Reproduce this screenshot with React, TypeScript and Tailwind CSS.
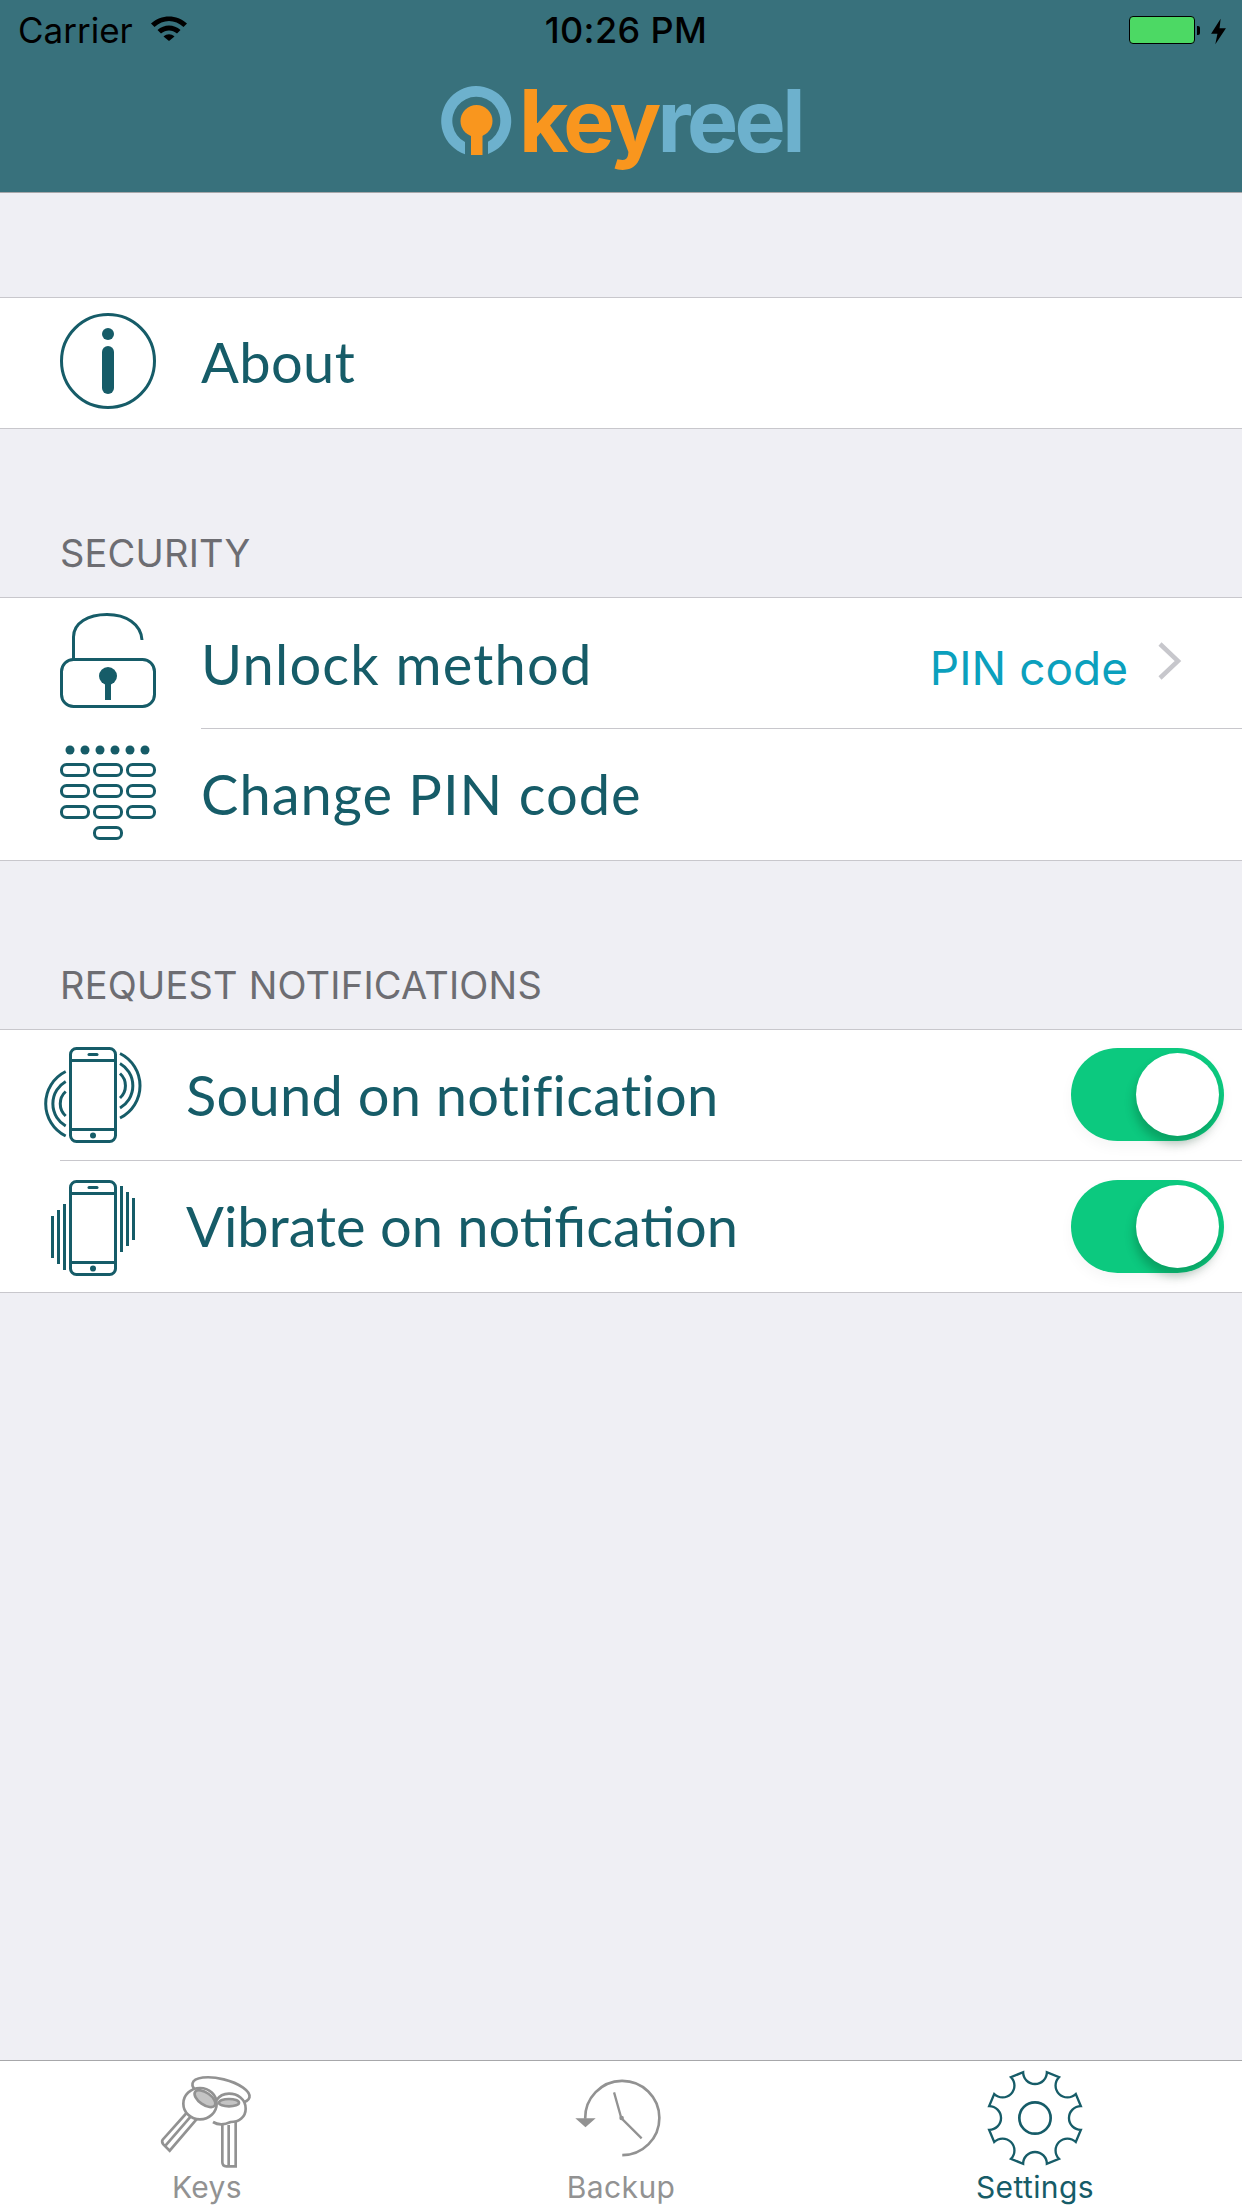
import React from "react";

const TEAL = "#165c68";

const gearPath = (() => {
  const cx = 315, cy = 203, r = 142, half = (14.5 * Math.PI) / 180;
  let d = "";
  for (let i = 0; i < 8; i++) {
    const a = (i * Math.PI) / 4;
    const p1 = [cx + r * Math.sin(a - half), cy - r * Math.cos(a - half)];
    const p2 = [cx + r * Math.sin(a + half), cy - r * Math.cos(a + half)];
    const f = (p: number[]) => `${p[0].toFixed(1)} ${p[1].toFixed(1)}`;
    d += i === 0 ? `M${f(p1)}` : `L${f(p1)}`;
    d += `A33 33 0 0 0 ${f(p2)}`;
  }
  return d + "Z";
})();

function Logo() {
  return (
    <div className="flex items-start h-[88px]" style={{ width: 362 }}>
      <svg width="84" height="76" viewBox="440 80 84 76" className="shrink-0">
        <path d="M465 151.2A35 35 0 1 1 488 151V138.8A24 24 0 1 0 465 139Z" fill="#6db1cd" />
        <circle cx="476.5" cy="118" r="16" fill="#f9961e" />
        <rect x="471" y="125" width="11.5" height="27" fill="#f9961e" />
      </svg>
      <div className="ml-[-5px] mt-[-6px] text-[86px] leading-[88px] font-bold tracking-[-3.6px] font-['Inter',sans-serif] whitespace-nowrap">
        <span className="text-[#f9961e]">key</span>
        <span className="text-[#6db1cd]">reel</span>
      </div>
    </div>
  );
}

function StatusBar() {
  return (
    <div className="relative flex items-center h-[60px] pl-[18px] pr-[15px] text-black font-['Inter',sans-serif] text-[35px] leading-[44px]">
      <span>Carrier</span>
      <svg width="38" height="26" viewBox="0 0 38 26" className="ml-[17px] mb-[4px]">
        <path d="M1 8.5C11 -1 27 -1 37 8.5L33.5 12C25 4 13 4 4.5 12Z" fill="#000" />
        <path d="M7.5 15C14 9 24 9 30.5 15L27 18.5C22 14.5 16 14.5 11 18.5Z" fill="#000" />
        <path d="M13.5 21.5C17 18.5 21 18.5 24.5 21.5L19 26Z" fill="#000" />
      </svg>
      <span className="absolute left-[10px] right-0 text-center text-[36px] font-medium tracking-[0.4px]">10:26 PM</span>
      <div className="ml-auto flex items-center">
        <div className="w-[66px] h-[28px] rounded-[4px] border border-black bg-[#4cd964]" />
        <div className="w-[3px] h-[9px] ml-[2px] rounded-r-[2px] bg-black" />
        <svg width="17" height="27" viewBox="0 0 16 24" className="ml-[10px] mt-[2px]">
          <path d="M10 0L1 14H7L5 24L15 9H9Z" fill="#000" />
        </svg>
      </div>
    </div>
  );
}

function Row({
  label,
  svg,
  labelClass,
  sep,
  right,
}: {
  label: string;
  svg: React.ReactNode;
  labelClass: string;
  sep?: string;
  right?: React.ReactNode;
}) {
  return (
    <div className="relative flex items-center bg-white h-[131px]">
      {svg}
      <span className={`${labelClass} font-['Lato',sans-serif] text-[56px] leading-[64px] text-[#165c68] whitespace-nowrap`}>
        {label}
      </span>
      {right}
      {sep && <div className={`absolute bottom-0 right-0 h-px bg-[#c8c7cc] ${sep}`} />}
    </div>
  );
}

function Toggle({ up }: { up?: boolean }) {
  return (
    <div
      className={`ml-auto mr-[18px] flex items-center justify-end pr-[5px] w-[153px] h-[93px] rounded-full bg-[#0cc97f] shadow-[0_6px_14px_rgba(0,0,0,0.04)] ${
        up ? "mb-[2px]" : ""
      }`}
    >
      <div className="w-[83px] h-[83px] rounded-full bg-white shadow-[-2px_8px_10px_rgba(0,60,30,0.28)]" />
    </div>
  );
}

function SectionLabel({ children }: { children: React.ReactNode }) {
  return (
    <div className="flex items-end h-[168px] pl-[60px] pb-[22px] text-[38px] leading-[44px] tracking-[0.2px] text-[#6d6d72] font-['Inter',sans-serif]">
      {children}
    </div>
  );
}

function PhoneBody({ y }: { y: number }) {
  return (
    <g>
      <rect x="70.5" y={y + 1.5} width="45" height="93" rx="6" fill="none" stroke={TEAL} strokeWidth="3" />
      <line x1="70" x2="116" y1={y + 13.5} y2={y + 13.5} stroke={TEAL} strokeWidth="3" />
      <line x1="70" x2="116" y1={y + 82.5} y2={y + 82.5} stroke={TEAL} strokeWidth="3" />
      <line x1="89" x2="97" y1={y + 7.5} y2={y + 7.5} stroke={TEAL} strokeWidth="3" strokeLinecap="round" />
      <circle cx="93" cy={y + 88.5} r="3" fill={TEAL} />
    </g>
  );
}

function TabItem({ label, active, icon }: { label: string; active?: boolean; icon: React.ReactNode }) {
  return (
    <div className="flex-1 flex flex-col items-center h-full">
      <div className="h-[108px] w-full flex items-start justify-center">{icon}</div>
      <span
        className={`text-[30px] leading-[36px] font-['Inter',sans-serif] tracking-[0.4px] ${
          active ? "text-[#165c68]" : "text-[#929292]"
        }`}
      >
        {label}
      </span>
    </div>
  );
}

export default function App() {
  const keypadCols = [60, 93, 126];
  const keypadRows = [762, 783, 804];
  return (
    <div className="flex flex-col w-[1242px] h-[2208px] bg-[#efeff4] overflow-hidden">
      <header className="h-[193px] shrink-0 bg-[#38717c] border-b border-[#a7a7aa] flex flex-col">
        <StatusBar />
        <div className="flex justify-center pt-[23px]">
          <Logo />
        </div>
      </header>

      <section className="mt-[104px] border-t border-[#c8c7cc]">
        <div className="h-[130px] flex flex-col justify-center bg-white">
          <Row
            label="About"
            labelClass="ml-[41px] mb-[2px] tracking-[0.4px]"
            svg={
              <svg width="104" height="104" viewBox="56 310 104 104" className="ml-[56px] shrink-0">
                <circle cx="108" cy="360" r="46.5" fill="none" stroke={TEAL} strokeWidth="3" />
                <circle cx="108" cy="333" r="6" fill={TEAL} />
                <rect x="102" y="345" width="12" height="48" rx="6" fill={TEAL} />
              </svg>
            }
          />
        </div>
      </section>
      <div className="h-px bg-[#c8c7cc]" />

      <SectionLabel>SECURITY</SectionLabel>
      <section className="border-t border-[#c8c7cc]">
        <Row
          label="Unlock method"
          labelClass="ml-[41px] tracking-[1.2px]"
          sep="left-[201px]"
          svg={
            <svg width="104" height="104" viewBox="56 611 104 104" className="ml-[56px] shrink-0">
              <rect x="61.5" y="658.5" width="93" height="47" rx="12" fill="none" stroke={TEAL} strokeWidth="3" />
              <path d="M73.5 658V636C73.5 622 88 613.5 107 613.5C126 613.5 141 623 142 639" fill="none" stroke={TEAL} strokeWidth="3" />
              <circle cx="108" cy="675" r="9" fill={TEAL} />
              <rect x="105" y="678" width="6" height="21" fill={TEAL} />
            </svg>
          }
          right={
            <div className="ml-auto flex items-center mr-[60px]">
              <span className="font-['Inter',sans-serif] text-[46px] leading-[56px] text-[#0ba0bd] mt-[8px]">PIN code</span>
              <svg width="24" height="38" viewBox="0 0 24 38" className="ml-[30px] mb-[6px]">
                <path d="M2 2L20 19L2 36" fill="none" stroke="#c7c7cc" strokeWidth="4.5" />
              </svg>
            </div>
          }
        />
        <Row
          label="Change PIN code"
          labelClass="ml-[41px] mb-[2px] tracking-[1px]"
          svg={
            <svg width="104" height="100" viewBox="56 744 104 100" className="ml-[56px] shrink-0">
              {[70, 85, 100, 115, 130, 145].map((x) => (
                <circle key={x} cx={x} cy="749" r="4.5" fill={TEAL} />
              ))}
              {keypadRows.map((y) =>
                keypadCols.map((x) => (
                  <rect key={`${x}-${y}`} x={x + 1.5} y={y + 1.5} width="27" height="11" rx="5" fill="none" stroke={TEAL} strokeWidth="3" />
                ))
              )}
              <rect x="94.5" y="826.5" width="27" height="11" rx="5" fill="none" stroke={TEAL} strokeWidth="3" />
            </svg>
          }
        />
      </section>
      <div className="h-px bg-[#c8c7cc]" />

      <SectionLabel>REQUEST NOTIFICATIONS</SectionLabel>
      <section className="border-t border-[#c8c7cc]">
        <Row
          label="Sound on notification"
          labelClass="ml-[42px] mb-[2px] tracking-[0.25px]"
          sep="left-[60px]"
          svg={
            <svg width="104" height="104" viewBox="40 1044 104 104" className="ml-[40px] shrink-0">
              <PhoneBody y={1047} />
              <g fill="none" stroke={TEAL} strokeWidth="3">
                <path d="M120 1053.5A36 36 0 0 1 120 1118" />
                <path d="M120 1063.5A25.7 25.7 0 0 1 120 1108" />
                <path d="M120 1073.5A16.5 16.5 0 0 1 120 1098" />
                <path d="M65.7 1071.5A36 36 0 0 0 65.7 1136" />
                <path d="M65.7 1081.5A25.7 25.7 0 0 0 65.7 1126" />
                <path d="M65.7 1091.5A16.5 16.5 0 0 0 65.7 1116" />
              </g>
            </svg>
          }
          right={<Toggle up />}
        />
        <Row
          label="Vibrate on notification"
          labelClass="ml-[42px] mb-[2px]"
          svg={
            <svg width="104" height="104" viewBox="40 1174 104 104" className="ml-[40px] shrink-0">
              <PhoneBody y={1179} />
              <g fill={TEAL}>
                <rect x="120" y="1185" width="3" height="66" />
                <rect x="126" y="1191" width="3" height="54" />
                <rect x="132" y="1197" width="3" height="42" />
                <rect x="51" y="1215" width="3" height="42" />
                <rect x="57" y="1209" width="3" height="54" />
                <rect x="63" y="1203" width="3" height="66" />
              </g>
            </svg>
          }
          right={<Toggle />}
        />
      </section>
      <div className="h-px bg-[#c8c7cc]" />

      <div className="flex-1" />

      <nav className="h-[148px] shrink-0 bg-white border-t border-[#a7a7aa] flex">
        <TabItem
          label="Keys"
          icon={
            <svg width="94" height="96" viewBox="90 55 282 288" className="mt-[11px] ml-[-2px]">
              <g fill="none" stroke="#929292" strokeWidth="8">
                <ellipse cx="276" cy="110" rx="88" ry="34" transform="rotate(14 276 110)" />
                <path d="M252 205C268 215 290 212 305 205C330 205 350 190 350 165C350 135 325 120 300 120C285 120 270 128 262 140" fill="#fff" />
                <path d="M280 212V325Q280 338 292 338H320V205" />
                <line x1="299" y1="214" x2="299" y2="334" />
                <ellipse cx="300" cy="147" rx="30" ry="11" fill="#c4c4c4" />
                <path d="M178 172L101 258Q97 265 103 272L122 291L205 194" fill="#fff" />
                <line x1="190" y1="183" x2="110" y2="275" />
                <ellipse cx="213" cy="150" rx="50" ry="47" fill="#fff" />
                <ellipse cx="228" cy="135" rx="36" ry="18" transform="rotate(35 228 135)" fill="#c4c4c4" />
              </g>
            </svg>
          }
        />
        <TabItem
          label="Backup"
          icon={
            <svg width="88" height="82" viewBox="96 86 268 246" className="mt-[18px] ml-[-7px]">
              <path d="M243 316A113 113 0 1 0 130 205" fill="none" stroke="#929292" strokeWidth="8" />
              <path d="M100 204H162L131 231Z" fill="#929292" />
              <path d="M218 125L240 203L302 265" fill="none" stroke="#929292" strokeWidth="7" />
              <circle cx="241" cy="203" r="7" fill="#929292" />
            </svg>
          }
        />
        <TabItem
          label="Settings"
          active
          icon={
            <svg width="96" height="96" viewBox="171 59 288 288" className="mt-[9px]">
              <path d={gearPath} fill="none" stroke={TEAL} strokeWidth="7" />
              <circle cx="315" cy="203" r="47" fill="none" stroke={TEAL} strokeWidth="8" />
            </svg>
          }
        />
      </nav>
    </div>
  );
}
